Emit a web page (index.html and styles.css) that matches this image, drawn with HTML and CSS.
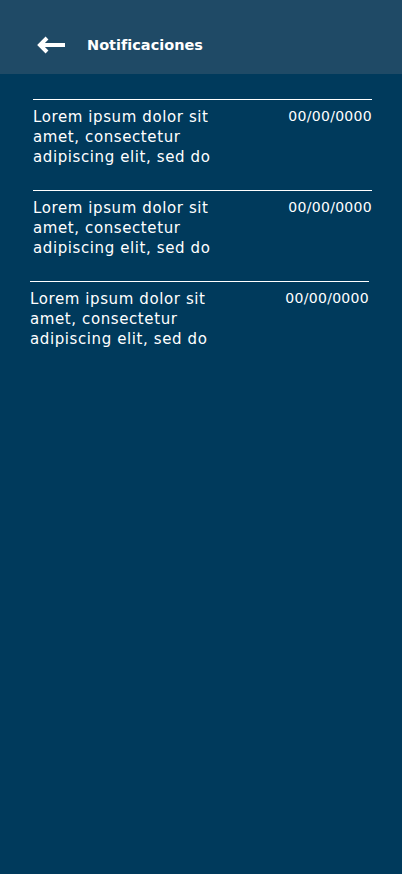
FILE: index.html
```html
<!DOCTYPE html>
<html lang="es">
<head>
  <meta charset="utf-8"/>
  <title>Notificaciones</title>
  <link rel="stylesheet" href="styles.css">
</head>
<body>

  <header class="topbar">
    <button type="button" class="back" aria-label="Volver">
      <svg width="28" height="18" viewBox="0 0 28 18">
        <path d="M28 9H4M10 2L3 9l7 7" fill="none" stroke="#fff" stroke-width="4" stroke-linecap="butt" stroke-linejoin="miter"/>
      </svg>
    </button>
    <h1 class="title">Notificaciones</h1>
  </header>

  <main class="list">
    <div class="item">
      <p class="text">Lorem ipsum dolor sit amet, consectetur adipiscing elit, sed do</p>
      <span class="date">00/00/0000</span>
    </div>
    <div class="item">
      <p class="text">Lorem ipsum dolor sit amet, consectetur adipiscing elit, sed do</p>
      <span class="date">00/00/0000</span>
    </div>
    <div class="item item-shift">
      <p class="text">Lorem ipsum dolor sit amet, consectetur adipiscing elit, sed do</p>
      <span class="date">00/00/0000</span>
    </div>
  </main>

</body>
</html>
```

FILE: styles.css
```css
html, body {
  margin: 0;
  height: 100%;
}

body {
  background: #003a5c;
  color: #fff;
  font-family: "DejaVu Sans", "Liberation Sans", sans-serif;
}

.topbar {
  height: 74px;
  background: #1f4a66;
  display: flex;
  align-items: center;
  padding: 16px 0 0 37px;
  box-sizing: border-box;
}

.back {
  background: none;
  border: 0;
  padding: 0;
  width: 28px;
  height: 18px;
  margin-top: -1px;
  display: flex;
}

.title {
  margin: 0 0 0 22px;
  font-size: 14.5px;
  font-weight: 700;
}

.list {
  padding: 25px 30px 0 33px;
}

.item {
  width: 339px;
  border-top: 1px solid #fff;
  display: flex;
  justify-content: space-between;
  align-items: flex-start;
  padding-top: 7px;
  height: 83px;
}

.item-shift {
  margin-left: -3px;
}

.text {
  margin: 0;
  width: 215px;
  font-size: 15px;
  line-height: 20px;
  letter-spacing: 0.6px;
}

.date {
  font-size: 14px;
  line-height: 20px;
  letter-spacing: 0.3px;
  margin-top: -1px;
}
```
